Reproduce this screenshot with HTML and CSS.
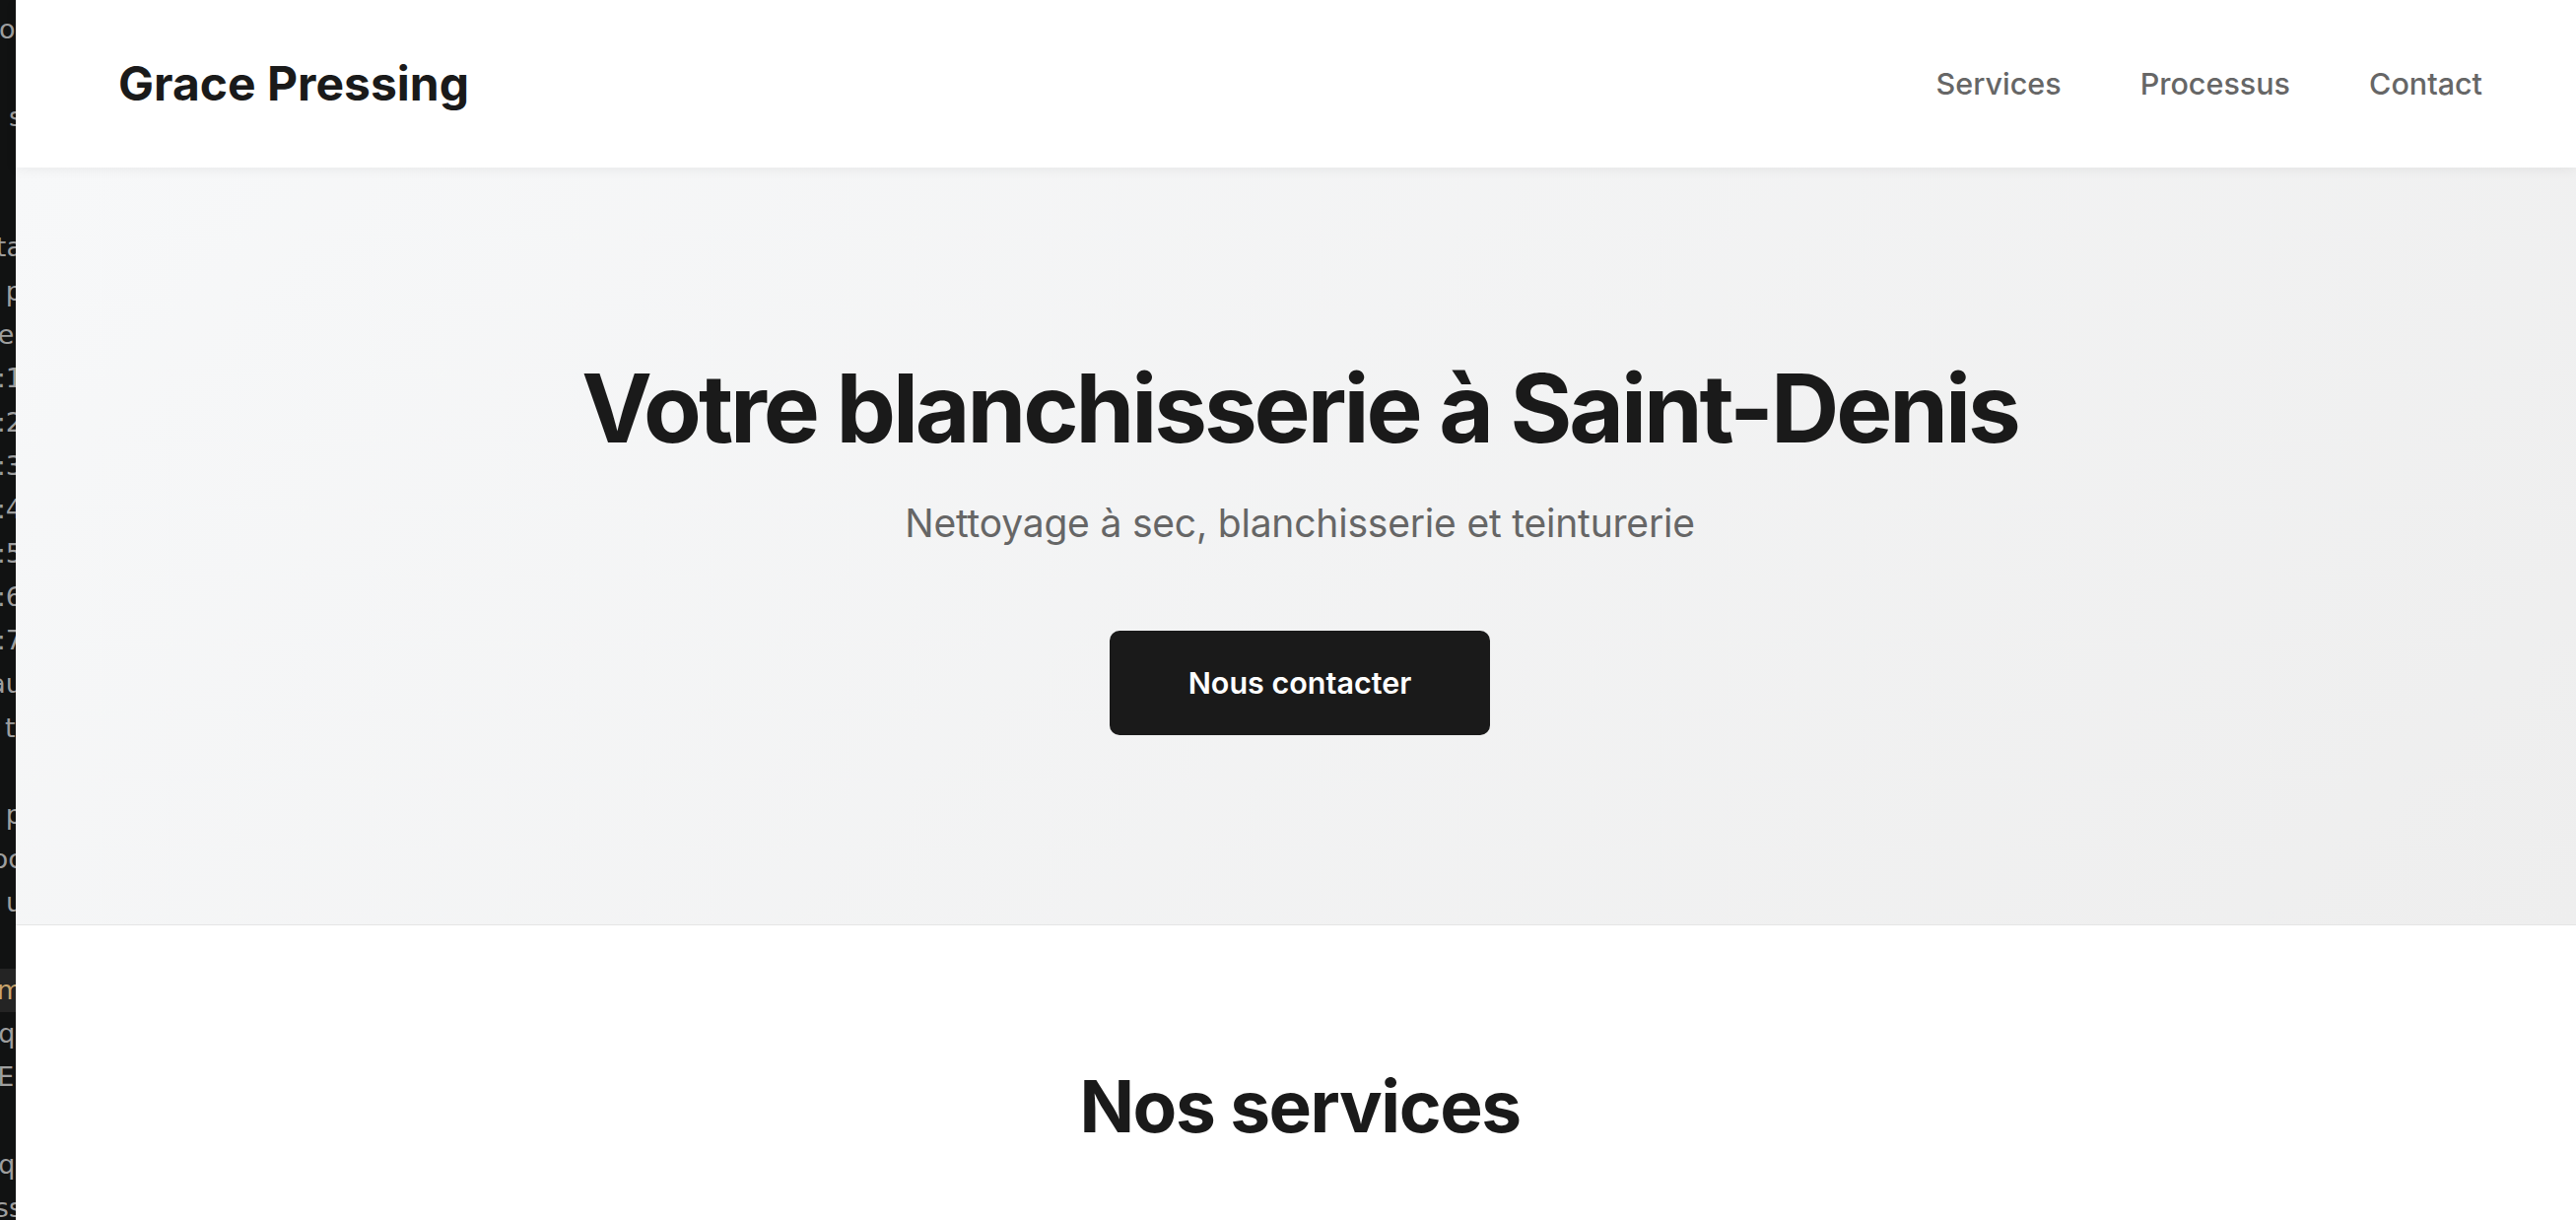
FILE: index.html
```html
<!DOCTYPE html>
<html lang="fr">
<head>
    <meta charset="UTF-8">
    <meta name="viewport" content="width=device-width, initial-scale=1.0">
    <title>Grace Pressing</title>
    <link rel="stylesheet" href="styles.css">
</head>
<body>

<aside class="editor-edge">
    <div class="edge-line"><span>ol</span></div>
    <div class="edge-line"><span>&nbsp;</span></div>
    <div class="edge-line"><span>s</span></div>
    <div class="edge-line"><span>&nbsp;</span></div>
    <div class="edge-line"><span>&nbsp;</span></div>
    <div class="edge-line"><span>ta</span></div>
    <div class="edge-line"><span>p</span></div>
    <div class="edge-line"><span>e.</span></div>
    <div class="edge-line"><span>:1</span></div>
    <div class="edge-line"><span>:2</span></div>
    <div class="edge-line"><span>:3</span></div>
    <div class="edge-line"><span>:4</span></div>
    <div class="edge-line"><span>:5</span></div>
    <div class="edge-line"><span>:6</span></div>
    <div class="edge-line"><span>:7</span></div>
    <div class="edge-line"><span>au</span></div>
    <div class="edge-line"><span>ti</span></div>
    <div class="edge-line"><span>&nbsp;</span></div>
    <div class="edge-line"><span>p</span></div>
    <div class="edge-line"><span>oc</span></div>
    <div class="edge-line"><span>u</span></div>
    <div class="edge-line"><span>&nbsp;</span></div>
    <div class="edge-line active"><span>m</span></div>
    <div class="edge-line"><span>ql</span></div>
    <div class="edge-line"><span>E.</span></div>
    <div class="edge-line"><span>&nbsp;</span></div>
    <div class="edge-line"><span>ql</span></div>
    <div class="edge-line"><span>ss</span></div>
</aside>

<div class="page">
    <header class="site-header">
        <a class="logo" href="#">Grace Pressing</a>
        <nav class="nav">
            <a href="#services">Services</a>
            <a href="#processus">Processus</a>
            <a href="#contact">Contact</a>
        </nav>
    </header>

    <section class="hero">
        <h1>Votre blanchisserie à Saint-Denis</h1>
        <p class="hero-sub">Nettoyage à sec, blanchisserie et teinturerie</p>
        <a class="btn" href="#contact">Nous contacter</a>
    </section>

    <section class="services" id="services">
        <h2>Nos services</h2>
    </section>
</div>

</body>
</html>
```

FILE: styles.css
```css
body {
    margin: 0;
    padding: 0;
    display: flex;
    min-height: 100vh;
    font-family: Inter, "Noto Sans", sans-serif;
    color: #1a1a1a;
    background-color: #fff;
    overflow: hidden;
}

/* strip of the code editor peeking in on the left */
.editor-edge {
    width: 16px;
    flex-shrink: 0;
    background-color: #111212;
    overflow: hidden;
    padding-top: 8px;
    font-family: "DejaVu Sans", sans-serif;
    font-size: 27px;
    color: #9e9e9e;
}

.edge-line {
    display: flex;
    justify-content: flex-end;
    width: 23px;
    height: 44.3px;
    line-height: 44.3px;
    white-space: nowrap;
}

.edge-line.active {
    background-color: #242424;
    color: #c9a46c;
}

.page {
    flex: 1;
    min-width: 0;
}

.site-header {
    position: relative;
    z-index: 1;
    height: 170px;
    display: flex;
    align-items: center;
    justify-content: space-between;
    padding: 0 95px 0 104px;
    background-color: #fff;
    box-shadow: 0 2px 12px rgba(0, 0, 0, 0.06);
}

.logo {
    margin-top: -2px;
    font-size: 48px;
    font-weight: 700;
    color: #1a1a1a;
    text-decoration: none;
}

.nav {
    display: flex;
    gap: 80px;
    margin-top: -2px;
}

.nav a {
    font-size: 30.5px;
    font-weight: 500;
    color: #666;
    text-decoration: none;
}

.hero {
    padding: 192px 0 192px 8px;
    text-align: center;
    background: linear-gradient(135deg, #f7f8f9 0%, #eeeeee 100%);
    border-bottom: 1px solid #e5e5e5;
}

.hero h1 {
    margin: 0 0 34px;
    font-size: 96px;
    font-weight: 700;
    line-height: 1.1;
    letter-spacing: -0.032em;
    color: #1a1a1a;
}

.hero-sub {
    margin: 0 0 80px;
    font-size: 39px;
    line-height: 1.5;
    letter-spacing: -0.005em;
    color: #666;
}

.btn {
    display: inline-block;
    padding: 32px 80px;
    font-size: 30.5px;
    font-weight: 600;
    line-height: 42px;
    color: #fff;
    background-color: #1a1a1a;
    border-radius: 10px;
    text-decoration: none;
}

.services {
    padding: 140px 0 0 8px;
    text-align: center;
}

.services h2 {
    margin: 0;
    font-size: 73px;
    font-weight: 700;
    line-height: 1.2;
    letter-spacing: -0.02em;
    color: #1a1a1a;
}
```
